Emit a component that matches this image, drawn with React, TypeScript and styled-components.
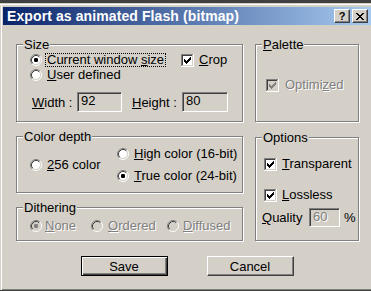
import React from "react";
import styled, { createGlobalStyle, css } from "styled-components";

const GlobalStyle = createGlobalStyle`
  html, body { margin: 0; padding: 0; background: #d4d0c8; overflow: hidden; }
  * { box-sizing: border-box; }
`;

const FONT = `"Liberation Sans", Arial, sans-serif`;

const Window = styled.div`
  width: 371px;
  height: 291px;
  background: #d4d0c8;
  border-top: 3px solid #404040;
  border-bottom: 1px solid #404040;
  padding: 4px 0 0 3px;
  box-shadow: inset 0 1px 0 #d4d0c8, inset 0 2px 0 #fff, inset 1px 0 0 #d4d0c8,
    inset 2px 0 0 #fff, inset 0 -1px 0 #808080;
  display: flex;
  flex-direction: column;
  font-family: ${FONT};
  font-size: 13px;
  color: #000;
`;

const TitleBar = styled.div`
  height: 18px;
  display: flex;
  align-items: center;
  padding: 0 3px 0 4px;
  background: linear-gradient(90deg, #0a246a 0%, #a6caf0 100%);
`;

const TitleText = styled.div`
  flex: 1;
  color: #fff;
  font-weight: bold;
  font-size: 14px;
  letter-spacing: 0.1px;
  white-space: nowrap;
`;

const CaptionButton = styled.div<{ $gap?: number }>`
  width: 16px;
  height: 14px;
  margin-left: ${(p) => p.$gap ?? 0}px;
  background: #d4d0c8;
  border: 1px solid;
  border-color: #fff #404040 #404040 #fff;
  box-shadow: inset -1px -1px 0 #808080;
  display: flex;
  align-items: center;
  justify-content: center;
  font-weight: bold;
  font-size: 11px;
  line-height: 1;
  color: #000;
`;

const Body = styled.div`
  flex: 1;
  display: flex;
  flex-direction: column;
  padding: 19px 0 0 13px;
`;

const Grid = styled.div`
  display: grid;
  grid-template-columns: 227px 104px;
  grid-template-rows: 78px 57px 34px;
  grid-template-areas:
    "size palette"
    "color options"
    "dither options";
  column-gap: 12px;
  row-gap: 14px;
`;

const Group = styled.div<{ $area: string; $pad: string; $mt?: number }>`
  position: relative;
  grid-area: ${(p) => p.$area};
  margin-top: ${(p) => p.$mt ?? 0}px;
  border: 1px solid #808080;
  box-shadow: inset 1px 1px 0 #fff, 1px 1px 0 #fff;
  padding: ${(p) => p.$pad};
`;

const Legend = styled.div`
  position: absolute;
  top: -8px;
  left: 6px;
  padding: 0 1px 0 1px;
  background: #d4d0c8;
  line-height: 15px;
  white-space: nowrap;
`;

const Row = styled.div<{ $mt?: number; $h?: number }>`
  display: flex;
  align-items: center;
  height: ${(p) => p.$h ?? 14}px;
  margin-top: ${(p) => p.$mt ?? 0}px;
`;

const Item = styled.div<{ $w?: number }>`
  display: flex;
  align-items: center;
  ${(p) => (p.$w ? `width: ${p.$w}px; flex: none;` : "")}
`;

const Label = styled.span<{ $focus?: boolean; $disabled?: boolean; $ml?: number }>`
  margin-left: ${(p) => p.$ml ?? 3}px;
  padding: 0 1px;
  line-height: 12px;
  border: 1px dotted ${(p) => (p.$focus ? "#000" : "transparent")};
  white-space: nowrap;
  ${(p) =>
    p.$disabled &&
    css`
      color: #808080;
      text-shadow: 1px 1px 0 #fff;
    `}
`;

const Text = styled.span<{ $w?: number; $ml?: number }>`
  white-space: nowrap;
  margin-left: ${(p) => p.$ml ?? 0}px;
  ${(p) => (p.$w ? `width: ${p.$w}px; flex: none;` : "")}
`;

const Field = styled.div<{ $w: number; $h: number; $disabled?: boolean }>`
  width: ${(p) => p.$w}px;
  height: ${(p) => p.$h}px;
  flex: none;
  border: 1px solid;
  border-color: #808080 #fff #fff #808080;
  box-shadow: inset 1px 1px 0 #404040, inset -1px -1px 0 #d4d0c8;
  background: #d4d0c8;
  padding: 1px 0 0 3px;
  line-height: 14px;
  color: ${(p) => (p.$disabled ? "#808080" : "#000")};
  ${(p) => p.$disabled && css`text-shadow: 1px 1px 0 #fff;`}
`;

const Columns = styled.div`
  display: flex;
  align-items: center;
`;

const Stack = styled.div<{ $gap: number }>`
  display: flex;
  flex-direction: column;
  gap: ${(p) => p.$gap}px;
`;

const ButtonRow = styled.div`
  display: flex;
  justify-content: center;
  gap: 39px;
  margin-top: 15px;
  padding-right: 13px;
`;

const PushButton = styled.div<{ $default?: boolean }>`
  width: 87px;
  height: 20px;
  display: flex;
  align-items: center;
  justify-content: center;
  background: #d4d0c8;
  border: 1px solid;
  ${(p) =>
    p.$default
      ? css`
          border-color: #000;
          box-shadow: inset 1px 1px 0 #fff, inset -1px -1px 0 #404040, inset -2px -2px 0 #808080;
        `
      : css`
          border-color: #fff #404040 #404040 #fff;
          box-shadow: inset -1px -1px 0 #808080;
        `}
`;

const U = styled.span`
  text-decoration: underline;
`;

const Radio: React.FC<{ checked?: boolean; disabled?: boolean }> = ({ checked, disabled }) => (
  <svg width="12" height="12" viewBox="0 0 12 12" style={{ flex: "none" }}>
    <circle cx="6" cy="6" r="4.5" fill={disabled ? "#d4d0c8" : "#fff"} />
    <path d="M2.11 9.89 A5.5 5.5 0 0 1 9.89 2.11" fill="none" stroke="#808080" strokeWidth="1" />
    <path d="M9.89 2.11 A5.5 5.5 0 0 1 2.11 9.89" fill="none" stroke="#fff" strokeWidth="1" />
    <path d="M2.82 9.18 A4.5 4.5 0 0 1 9.18 2.82" fill="none" stroke="#404040" strokeWidth="1" />
    <path d="M9.18 2.82 A4.5 4.5 0 0 1 2.82 9.18" fill="none" stroke="#d4d0c8" strokeWidth="1" />
    {checked && <rect x="4" y="4" width="4" height="4" rx="1.2" fill={disabled ? "#808080" : "#000"} />}
  </svg>
);

const CHECK: [number, number][] = [
  [3, 5], [4, 6], [5, 7], [6, 6], [7, 5], [8, 4], [9, 3],
];

const Check: React.FC<{ checked?: boolean; disabled?: boolean }> = ({ checked, disabled }) => (
  <svg width="13" height="13" viewBox="0 0 13 13" style={{ flex: "none" }} shapeRendering="crispEdges">
    <rect x="0" y="0" width="13" height="13" fill="#fff" />
    <rect x="0" y="0" width="12" height="12" fill="#808080" />
    <rect x="1" y="1" width="11" height="11" fill="#d4d0c8" />
    <rect x="1" y="1" width="10" height="10" fill="#404040" />
    <rect x="2" y="2" width="9" height="9" fill={disabled ? "#d4d0c8" : "#fff"} />
    {checked &&
      CHECK.map(([x, y]) => (
        <rect key={x} x={x} y={y} width="1" height="3" fill={disabled ? "#808080" : "#000"} />
      ))}
  </svg>
);

export default function App() {
  return (
    <>
      <GlobalStyle />
      <Window>
        <TitleBar>
          <TitleText>Export as animated Flash (bitmap)</TitleText>
          <CaptionButton>?</CaptionButton>
          <CaptionButton $gap={2}>
            <svg width="8" height="7" viewBox="0 0 8 7" shapeRendering="crispEdges">
              <path d="M0 0h2v1h-2zM6 0h2v1h-2zM1 1h2v1h-2zM5 1h2v1h-2zM2 2h4v1h-4zM3 3h2v1h-2zM2 4h4v1h-4zM1 5h2v1h-2zM5 5h2v1h-2zM0 6h2v1h-2zM6 6h2v1h-2z" fill="#000" />
            </svg>
          </CaptionButton>
        </TitleBar>
        <Body>
          <Grid>
            <Group $area="size" $pad="8px 0 0 13px">
              <Legend>Size</Legend>
              <Row>
                <Item $w={151}>
                  <Radio checked />
                  <Label $focus>
                    Current window <U>s</U>ize
                  </Label>
                </Item>
                <Item>
                  <Check checked />
                  <Label $ml={3}>
                    <U>C</U>rop
                  </Label>
                </Item>
              </Row>
              <Row $mt={1}>
                <Item>
                  <Radio />
                  <Label>
                    <U>U</U>ser defined
                  </Label>
                </Item>
              </Row>
              <Row $mt={10} $h={20}>
                <Text $w={45} $ml={2}>
                  <U>W</U>idth :
                </Text>
                <Field $w={45} $h={20}>92</Field>
                <Text $w={50} $ml={10}>
                  <U>H</U>eight :
                </Text>
                <Field $w={46} $h={20}>80</Field>
              </Row>
            </Group>

            <Group $area="palette" $pad="33px 0 0 10px">
              <Legend>
                <U>P</U>alette
              </Legend>
              <Row>
                <Item>
                  <Check checked disabled />
                  <Label $disabled $ml={4}>
                    Optimi<U>z</U>ed
                  </Label>
                </Item>
              </Row>
            </Group>

            <Group $area="color" $pad="10px 0 0 13px">
              <Legend>Color depth</Legend>
              <Columns>
                <Item $w={87}>
                  <Radio />
                  <Label>
                    <U>2</U>56 color
                  </Label>
                </Item>
                <Stack $gap={8}>
                  <Row>
                    <Radio />
                    <Label>
                      <U>H</U>igh color (16-bit)
                    </Label>
                  </Row>
                  <Row>
                    <Radio checked />
                    <Label>
                      <U>T</U>rue color (24-bit)
                    </Label>
                  </Row>
                </Stack>
              </Columns>
            </Group>

            <Group $area="options" $mt={1} $pad="19px 0 0 8px">
              <Legend>Options</Legend>
              <Row>
                <Check checked />
                <Label $ml={3}>
                  <U>T</U>ransparent
                </Label>
              </Row>
              <Row $mt={17}>
                <Check checked />
                <Label $ml={3}>
                  <U>L</U>ossless
                </Label>
              </Row>
              <Row $mt={6} $h={19}>
                <Text $w={47} $ml={-2}>
                  <U>Q</U>uality
                </Text>
                <Field $w={31} $h={19} $disabled>
                  60
                </Field>
                <Text $ml={4}>%</Text>
              </Row>
            </Group>

            <Group $area="dither" $pad="11px 0 0 13px">
              <Legend>Dithering</Legend>
              <Row>
                <Item $w={61}>
                  <Radio checked disabled />
                  <Label $disabled $ml={1}>
                    <U>N</U>one
                  </Label>
                </Item>
                <Item $w={76}>
                  <Radio disabled />
                  <Label $disabled $ml={3}>
                    <U>O</U>rdered
                  </Label>
                </Item>
                <Item>
                  <Radio disabled />
                  <Label $disabled $ml={2}>
                    <U>D</U>iffused
                  </Label>
                </Item>
              </Row>
            </Group>
          </Grid>
          <ButtonRow>
            <PushButton $default>Save</PushButton>
            <PushButton>Cancel</PushButton>
          </ButtonRow>
        </Body>
      </Window>
    </>
  );
}
